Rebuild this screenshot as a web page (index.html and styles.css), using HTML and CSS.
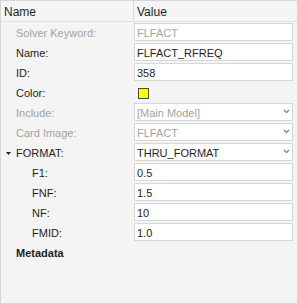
FILE: index.html
```html
<!DOCTYPE html>
<html>
<head>
<meta charset="utf-8">
<link rel="stylesheet" href="styles.css">
</head>
<body>
<div class="panel">
  <div class="header">
    <div class="hcell hname">Name</div>
    <div class="hcell hvalue">Value</div>
  </div>
  <div class="rows">
    <div class="label dis">Solver Keyword:</div>
    <div class="field dis">FLFACT</div>

    <div class="label">Name:</div>
    <div class="field">FLFACT_RFREQ</div>

    <div class="label">ID:</div>
    <div class="field">358</div>

    <div class="label">Color:</div>
    <div class="colorcell"><span class="swatch"></span></div>

    <div class="label dis">Include:</div>
    <div class="field dis select">[Main Model]<svg class="chev" width="7" height="5" viewBox="0 0 7 5"><path d="M1 1 L3.5 3.5 L6 1" fill="none" stroke="#8a8a8a" stroke-width="1.5"/></svg></div>

    <div class="label dis">Card Image:</div>
    <div class="field dis select">FLFACT<svg class="chev" width="7" height="5" viewBox="0 0 7 5"><path d="M1 1 L3.5 3.5 L6 1" fill="none" stroke="#8a8a8a" stroke-width="1.5"/></svg></div>

    <div class="label group"><svg class="tri" width="5" height="3" viewBox="0 0 5 3"><path d="M0 0 H5 L2.5 3 Z" fill="#222"/></svg>FORMAT:</div>
    <div class="field select">THRU_FORMAT<svg class="chev" width="7" height="5" viewBox="0 0 7 5"><path d="M1 1 L3.5 3.5 L6 1" fill="none" stroke="#8a8a8a" stroke-width="1.5"/></svg></div>

    <div class="label sub">F1:</div>
    <div class="field">0.5</div>

    <div class="label sub">FNF:</div>
    <div class="field">1.5</div>

    <div class="label sub">NF:</div>
    <div class="field">10</div>

    <div class="label sub">FMID:</div>
    <div class="field">1.0</div>

    <div class="label meta">Metadata</div>
    <div></div>
  </div>
</div>
</body>
</html>
```
FILE: styles.css
```css
html, body {
  margin: 0;
  padding: 0;
  background: #f4f4f4;
}
.panel {
  width: 298px;
  height: 304px;
  box-sizing: border-box;
  border: 1px solid #d6d6d6;
  background: #f4f4f4;
  font-family: "Liberation Sans", Arial, sans-serif;
  color: #1e1e1e;
}
.header {
  display: grid;
  grid-template-columns: 133px 1fr;
  height: 20px;
  border-bottom: 1px solid #e0e0e0;
  background: #f5f5f5;
  font-size: 12px;
}
.hcell {
  display: flex;
  align-items: center;
  padding-top: 1px;
}
.hname {
  padding-left: 3px;
  border-right: 1px solid #dcdcdc;
}
.hvalue {
  padding-left: 3px;
}
.rows {
  display: grid;
  grid-template-columns: 133px 159px;
  grid-auto-rows: 18px;
  row-gap: 2px;
  padding-top: 1px;
  font-size: 11px;
}
.label {
  display: flex;
  align-items: center;
  padding-left: 15px;
  padding-top: 1px;
  white-space: nowrap;
}
.label.sub {
  padding-left: 31px;
}
.label.group {
  padding-left: 5px;
}
.tri {
  margin-right: 5px;
  margin-top: 1px;
}
.label.meta {
  font-weight: bold;
}
.dis {
  color: #a3a3a3;
}
.field {
  box-sizing: border-box;
  height: 18px;
  background: #ffffff;
  border: 1px solid #d7d7d7;
  display: flex;
  align-items: center;
  padding-left: 2px;
  padding-top: 1px;
  white-space: nowrap;
}
.field.select {
  justify-content: space-between;
  padding-right: 2px;
}
.chev {
  margin-top: -3px;
}
.colorcell {
  display: flex;
  align-items: center;
  padding-left: 4px;
  padding-top: 2px;
}
.swatch {
  width: 9px;
  height: 9px;
  background: #ffff00;
  border: 1px solid #4a4a3a;
}
```
